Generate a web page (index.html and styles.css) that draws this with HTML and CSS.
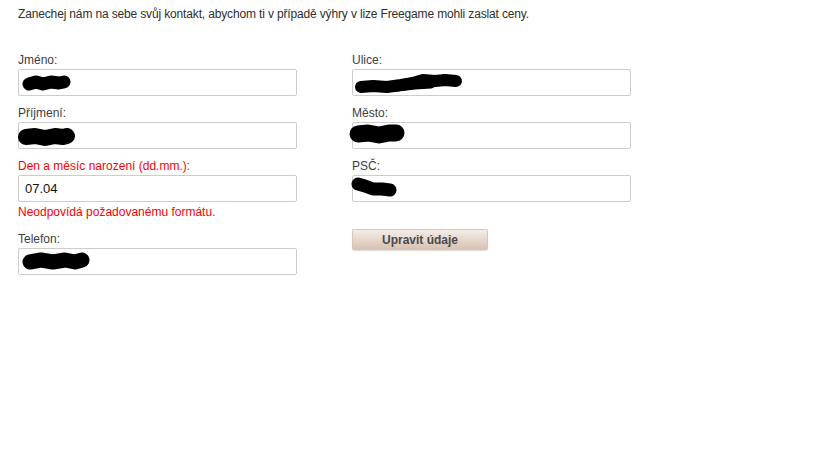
FILE: index.html
```html
<!DOCTYPE html>
<html>
	<head>
		<meta charset="UTF-8">
		<title>Kontakt</title>
		<link rel="stylesheet" href="styles.css">
	</head>
	<body>
		<div class="page">
			<p class="intro">Zanechej nám na sebe svůj kontakt, abychom ti v případě výhry v lize Freegame mohli zaslat ceny.</p>
			<form class="form">
				<div class="col">
					<div class="row">
						<label class="label">Jméno:</label>
						<div class="field">
							<input type="text" class="input" value="">
							<svg class="blot" style="left:3px;top:3px" width="50" height="22" viewBox="0 0 50 22"><path d="M8 12 L15 10 L22 12 L30 10 L38 11 L43 10" fill="none" stroke="#000" stroke-width="13" stroke-linecap="round" stroke-linejoin="round"/></svg>
						</div>
					</div>
					<div class="row">
						<label class="label">Příjmení:</label>
						<div class="field">
							<input type="text" class="input" value="">
							<svg class="blot" style="left:-1px;top:3px" width="58" height="24" viewBox="0 0 58 24"><path d="M9 12 L18 11 L28 13 L38 11 L46 12 L50 11" fill="none" stroke="#000" stroke-width="16" stroke-linecap="round" stroke-linejoin="round"/></svg>
						</div>
					</div>
					<div class="row">
						<label class="label error">Den a měsíc narození (dd.mm.):</label>
						<div class="field">
							<input type="text" class="input" value="07.04">
						</div>
						<div class="msg">Neodpovídá požadovanému formátu.</div>
					</div>
					<div class="row">
						<label class="label">Telefon:</label>
						<div class="field">
							<input type="text" class="input" value="">
							<svg class="blot" style="left:3px;top:2px" width="70" height="22" viewBox="0 0 70 22"><path d="M9 12 L20 10 L32 12 L44 10 L54 12 L61 10" fill="none" stroke="#000" stroke-width="15" stroke-linecap="round" stroke-linejoin="round"/></svg>
						</div>
					</div>
				</div>
				<div class="col">
					<div class="row">
						<label class="label">Ulice:</label>
						<div class="field">
							<input type="text" class="input" value="">
							<svg class="blot" style="left:1px;top:1px" width="110" height="26" viewBox="0 0 110 26"><path d="M8 17 L20 16 L34 17 L48 15 L60 13 L70 10 L82 11 L92 10 L103 11" fill="none" stroke="#000" stroke-width="12" stroke-linecap="round" stroke-linejoin="round"/><path d="M24 17 L44 17 L62 15 L78 14" fill="none" stroke="#000" stroke-width="9" stroke-linecap="round"/></svg>
						</div>
					</div>
					<div class="row">
						<label class="label">Město:</label>
						<div class="field">
							<input type="text" class="input" value="">
							<svg class="blot" style="left:-4px;top:0" width="58" height="24" viewBox="0 0 58 24"><path d="M10 12 L20 11 L31 13 L41 11 L48 11" fill="none" stroke="#000" stroke-width="17" stroke-linecap="round" stroke-linejoin="round"/></svg>
						</div>
					</div>
					<div class="row">
						<label class="label">PSČ:</label>
						<div class="field">
							<input type="text" class="input" value="">
							<svg class="blot" style="left:-2px;top:1px" width="50" height="24" viewBox="0 0 50 24"><path d="M8 8 L15 10 L23 13 L32 13 L40 14" fill="none" stroke="#000" stroke-width="13" stroke-linecap="round" stroke-linejoin="round"/></svg>
						</div>
					</div>
					<div class="row">
						<button type="button" class="btn">Upravit údaje</button>
					</div>
				</div>
			</form>
		</div>
	</body>
</html>
```

FILE: styles.css
```css
body{
	margin:0;
	background:#fff;
	font-family:"Liberation Sans", Arial, sans-serif;
	font-size:12px;
	color:#333;
}
.page{
	padding:6px 18px;
}
.intro{
	margin:0;
	line-height:16px;
	letter-spacing:-0.15px;
	color:#2e2e2e;
}
.form{
	display:flex;
	gap:55px;
	margin-top:27px;
}
.col{
	display:flex;
	flex-direction:column;
	gap:6px;
	width:279px;
}
.row{
	display:flex;
	flex-direction:column;
}
.label{
	display:block;
	height:20px;
	line-height:22px;
	color:#3d3d45;
}
.label.error,
.msg{
	color:#f00;
}
.msg{
	line-height:21px;
	height:20px;
}
.field{
	position:relative;
	height:27px;
}
.input{
	box-sizing:border-box;
	width:100%;
	height:27px;
	margin:0;
	padding:0 6px;
	border:1px solid #ccc;
	border-radius:2px;
	font-family:"Liberation Sans", Arial, sans-serif;
	font-size:13px;
	color:#111;
	background:#fff;
}
.blot{
	position:absolute;
}
.btn{
	width:136px;
	height:21px;
	margin-top:21px;
	padding:0;
	border:1px solid #d8c6b8;
	border-radius:2px;
	background:linear-gradient(#f4ede7, #d9c2b3);
	box-shadow:0 1px 1px rgba(0,0,0,0.15);
	font-family:"Liberation Sans", Arial, sans-serif;
	font-size:12px;
	font-weight:bold;
	color:#4a4a4a;
}
```
